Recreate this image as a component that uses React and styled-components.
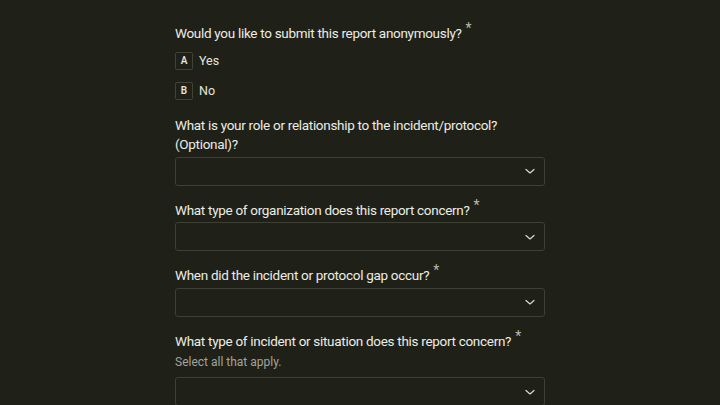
import styled, { createGlobalStyle } from "styled-components";

const GlobalStyle = createGlobalStyle`
  html, body {
    margin: 0;
    padding: 0;
    background: #1f2118;
  }
  body {
    font-family: Roboto, "Noto Sans", sans-serif;
    color: #e9e9e1;
  }
`;

const Page = styled.div`
  width: 720px;
  height: 405px;
  overflow: hidden;
  background: #1f2118;
  display: flex;
  justify-content: center;
`;

const Form = styled.div`
  width: 370px;
  padding-top: 24px;
  display: flex;
  flex-direction: column;
`;

const Question = styled.div`
  display: flex;
  flex-direction: column;
  margin-bottom: ${(p) => p.$gap || "15px"};
`;

const Title = styled.div`
  font-size: 13.5px;
  line-height: 19.5px;
  letter-spacing: -0.3px;
  font-weight: 400;
  color: #ecece4;
  margin-bottom: ${(p) => p.$mb || "2px"};
`;

const Star = styled.span`
  font-size: 14px;
  color: #b9b9b0;
  position: relative;
  top: -5px;
  margin-left: 4px;
`;

const Hint = styled.div`
  font-size: 12px;
  line-height: 20px;
  color: #a3a39a;
  margin-top: 1px;
  margin-bottom: 5px;
`;

const Options = styled.div`
  display: flex;
  flex-direction: column;
  gap: 12px;
`;

const Option = styled.div`
  display: flex;
  align-items: center;
  gap: 6px;
  font-size: 12.5px;
  color: #e4e4dc;
`;

const Key = styled.div`
  width: 16px;
  height: 16px;
  border: 1px solid #414335;
  border-radius: 2px;
  display: flex;
  align-items: center;
  justify-content: center;
  font-size: 10px;
  font-weight: 600;
  color: #e4e4dc;
`;

const Select = styled.div`
  height: 27px;
  border: 1px solid #3e4033;
  border-radius: 3px;
  display: flex;
  align-items: center;
  justify-content: flex-end;
  padding-right: 8px;
`;

const Chevron = () => (
  <svg width="12" height="12" viewBox="0 0 24 24" fill="none" stroke="#d8d8d0" strokeWidth="2.4" strokeLinecap="round" strokeLinejoin="round">
    <path d="M4 9l8 7 8-7" />
  </svg>
);

export default function App() {
  return (
    <Page>
      <GlobalStyle />
      <Form>
        <Question $gap="16px">
          <Title $mb="8px">
            Would you like to submit this report anonymously?<Star>*</Star>
          </Title>
          <Options>
            <Option><Key>A</Key>Yes</Option>
            <Option><Key>B</Key>No</Option>
          </Options>
        </Question>

        <Question>
          <Title>What is your role or relationship to the incident/protocol? (Optional)?</Title>
          <Select><Chevron /></Select>
        </Question>

        <Question>
          <Title>What type of organization does this report concern?<Star>*</Star></Title>
          <Select><Chevron /></Select>
        </Question>

        <Question>
          <Title>When did the incident or protocol gap occur?<Star>*</Star></Title>
          <Select><Chevron /></Select>
        </Question>

        <Question>
          <Title $mb="0">What type of incident or situation does this report concern?<Star>*</Star></Title>
          <Hint>Select all that apply.</Hint>
          <Select><Chevron /></Select>
        </Question>
      </Form>
    </Page>
  );
}
